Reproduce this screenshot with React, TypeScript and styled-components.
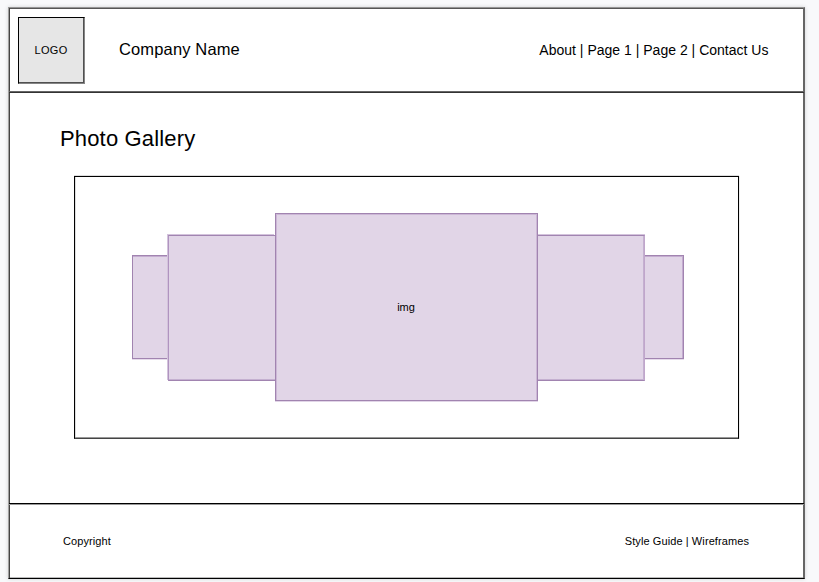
import React from "react";
import styled, { createGlobalStyle } from "styled-components";

const GlobalStyle = createGlobalStyle`
  * { box-sizing: border-box; }
  html, body { height: 100%; }
  body {
    margin: 0;
    overflow: hidden;
    background: #f8f9fb;
    color: #000;
    font-family: "Liberation Sans", Arial, sans-serif;
  }
`;

const Page = styled.div`
  width: 797px;
  height: 572px;
  margin: 7px 0 0 8px;
  display: flex;
  flex-direction: column;
  background: #fff;
  border: 1px solid;
  border-color: #959595 #666 #000 #a0a0a0;
  box-shadow: inset 1px 0 #444, inset -1px 0 #666, inset 0 1px #555,
    inset 0 -1px #bbb, 0 0 4px rgba(0, 0, 0, 0.16);
`;

const Header = styled.header`
  height: 85px;
  flex: none;
  display: flex;
  align-items: center;
  padding: 0 35.5px 0 9px;
  border-bottom: 1px solid #333;
  box-shadow: inset 0 -1px #666;
`;

const Logo = styled.div`
  width: 67px;
  height: 67px;
  display: flex;
  align-items: center;
  justify-content: center;
  padding-right: 1px;
  background: #e6e6e6;
  border: 1px solid;
  border-color: #000 #858585 #858585 #000;
  box-shadow: inset -1px -1px #505050;
  font-size: 11px;
  letter-spacing: 0.3px;
`;

const Company = styled.div`
  margin-left: 34px;
  padding-bottom: 2px;
  font-size: 16.5px;
  letter-spacing: 0.14px;
  line-height: 20px;
`;

const Nav = styled.nav`
  margin-left: auto;
  font-size: 14px;
  letter-spacing: 0.01px;
  line-height: 20px;
  white-space: pre;
`;

const Main = styled.main`
  flex: 1;
  padding: 32px 0 0 51px;
`;

const Title = styled.h1`
  margin: 0;
  font-size: 22px;
  font-weight: 400;
  letter-spacing: 0.16px;
  line-height: 28px;
`;

const Gallery = styled.section`
  width: 665px;
  height: 263px;
  margin: 23px 0 0 14px;
  padding: 0 0 1px 57px;
  display: flex;
  align-items: center;
  border: 1px solid #000;
  border-bottom-color: #444;
  box-shadow: inset 0 -1px #999, 1px 0 #eee, 0 -1px #ddd, inset 1px 0 #ddd;
`;

const Photo = styled.div<{ $w: number; $h: number }>`
  width: ${(p) => p.$w}px;
  height: ${(p) => p.$h}px;
  display: flex;
  align-items: center;
  justify-content: center;
  background: #e1d5e7;
  border: 0 solid #a184b0;
  font-size: 11px;
`;

const OuterPhoto = styled(Photo)<{ $side: "left" | "right" }>`
  border-width: 1px 0;
  border-${(p) => p.$side}-width: 1px;
  box-shadow: inset ${(p) => (p.$side === "left" ? "0 1px #c4acd0" : "-1px 1px #c4acd0")}, 0 1px #e6dceb;
`;

const InnerPhoto = styled(Photo)<{ $side: "left" | "right" }>`
  margin-top: 2px;
  border-width: 1px 0;
  border-${(p) => p.$side}-width: 1px;
  border-${(p) => p.$side}-color: ${(p) => (p.$side === "left" ? "#b094c0" : "#c0a6cb")};
  box-shadow: inset ${(p) => (p.$side === "left" ? "0" : "-1px")} -1px #c4b0d0,
    ${(p) => (p.$side === "left" ? "-1px" : "0")} -1px #d3c3dc;
`;

const CenterPhoto = styled(Photo)`
  padding: 0 1px 0 0;
  border-width: 1px;
  box-shadow: inset 1px 1px #ccb7d6, inset -1px 0 #ccb7d6, 0 1px #e1d5e7;
`;

const Footer = styled.footer`
  height: 75px;
  flex: none;
  display: flex;
  align-items: center;
  justify-content: space-between;
  padding: 0 55px 1px 54px;
  border-top: 1px solid #000;
  box-shadow: inset 0 1px #999;
  font-size: 11px;
  letter-spacing: 0.09px;
`;

export default function App() {
  return (
    <>
      <GlobalStyle />
      <Page>
        <Header>
          <Logo>LOGO</Logo>
          <Company>Company Name</Company>
          <Nav>About | Page 1 | Page 2 | Contact Us</Nav>
        </Header>
        <Main>
          <Title>Photo Gallery</Title>
          <Gallery>
            <OuterPhoto $w={36} $h={104} $side="left" />
            <InnerPhoto $w={107} $h={146} $side="left" />
            <CenterPhoto $w={263} $h={188}>img</CenterPhoto>
            <InnerPhoto $w={107} $h={146} $side="right" />
            <OuterPhoto $w={39} $h={104} $side="right" />
          </Gallery>
        </Main>
        <Footer>
          <span>Copyright</span>
          <span>Style Guide | Wireframes</span>
        </Footer>
      </Page>
    </>
  );
}
